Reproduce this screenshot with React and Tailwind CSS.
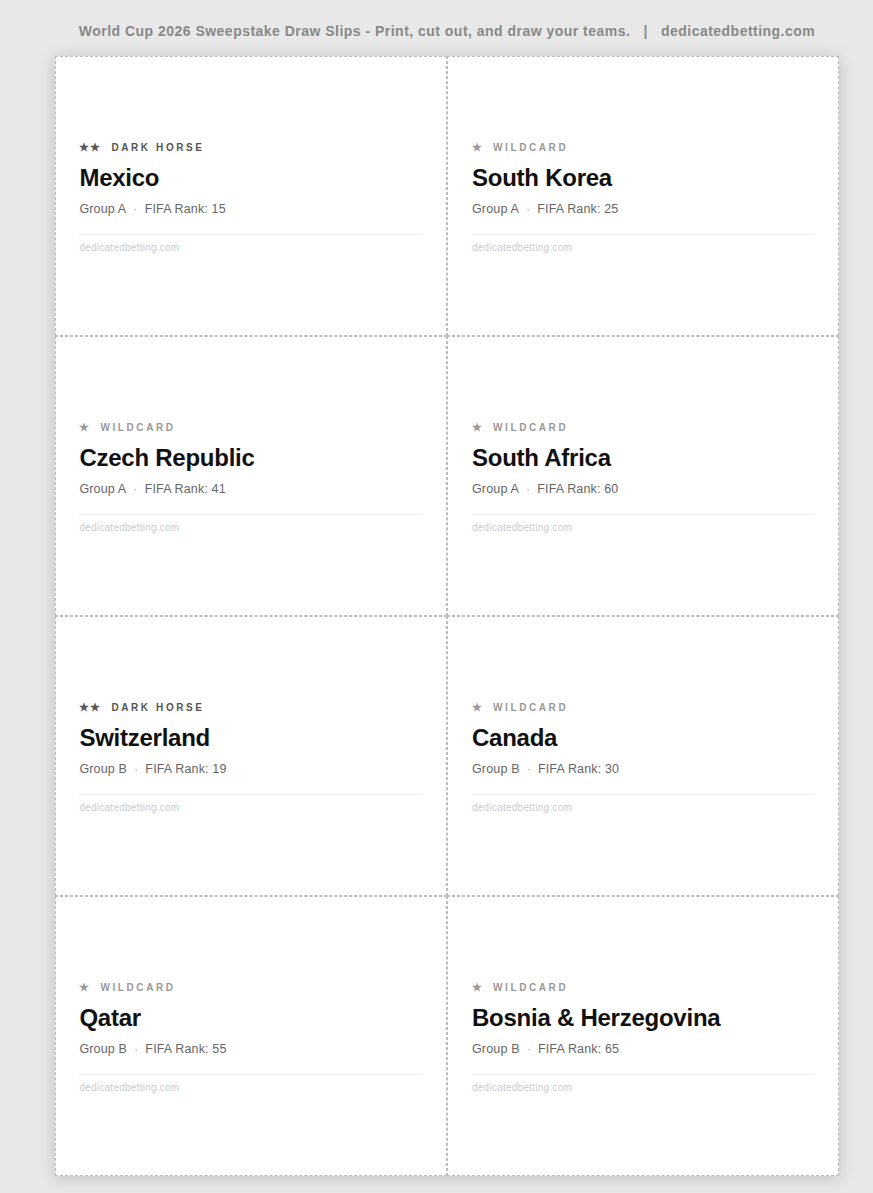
const slips = [
  { tier: 2, name: "Mexico", group: "A", rank: 15 },
  { tier: 1, name: "South Korea", group: "A", rank: 25 },
  { tier: 1, name: "Czech Republic", group: "A", rank: 41 },
  { tier: 1, name: "South Africa", group: "A", rank: 60 },
  { tier: 2, name: "Switzerland", group: "B", rank: 19 },
  { tier: 1, name: "Canada", group: "B", rank: 30 },
  { tier: 1, name: "Qatar", group: "B", rank: 55 },
  { tier: 1, name: "Bosnia & Herzegovina", group: "B", rank: 65 },
];

function Slip({ slip, index }) {
  const dark = slip.tier === 2;
  return (
    <div
      className={`flex h-[280px] w-[392px] flex-col border border-dashed border-[#bbbbbb] pt-[84px] ${
        index % 2 === 0 ? "pl-[23.4px] pr-[24.6px]" : "pl-6 pr-[23px]"
      }`}
    >
      <div
        className={`flex h-[14px] items-center gap-[10px] text-[10px] font-bold leading-[14px] tracking-[2.6px] ${
          dark ? "text-[#555555]" : "text-[#999999]"
        }`}
      >
        <span className="mb-[2px] text-[11px] tracking-[1px]">{dark ? "★★" : "★"}</span>
        <span>{dark ? "DARK HORSE" : "WILDCARD"}</span>
      </div>
      <div className="mt-[8px] text-[24px] font-bold leading-[30px] tracking-[-0.25px] text-[#111111]">{slip.name}</div>
      <div className="mt-[8px] flex h-[16px] items-center text-[12.5px] leading-[16px] tracking-[0.15px] text-[#666666]">
        <span>Group {slip.group}</span>
        <span className="mx-[7px] text-[#aaaaaa]">·</span>
        <span>FIFA Rank: {slip.rank}</span>
      </div>
      <div className="mt-[17px] border-t border-[#eeeeee] pt-[7px] text-[10px] leading-[12px] tracking-[0.25px] text-[#cccccc]">
        dedicatedbetting.com
      </div>
    </div>
  );
}

export default function App() {
  return (
    <div className="min-h-[1193px] bg-[#e8e8e8] pl-[55px] font-['Liberation_Sans',Arial,sans-serif]">
      <div className="flex h-[56px] w-[784px] items-start justify-center pt-[22px] text-[14px] font-bold leading-[18px] tracking-[0.48px] text-[#888888]">
        <span className="whitespace-pre">World Cup 2026 Sweepstake Draw Slips - Print, cut out, and draw your teams.   |   dedicatedbetting.com</span>
      </div>
      <div className="grid w-[784px] grid-cols-[392px_392px] bg-white shadow-[0_2px_16px_rgba(0,0,0,0.18)]">
        {slips.map((slip, i) => (
          <Slip key={slip.name} slip={slip} index={i} />
        ))}
      </div>
    </div>
  );
}
